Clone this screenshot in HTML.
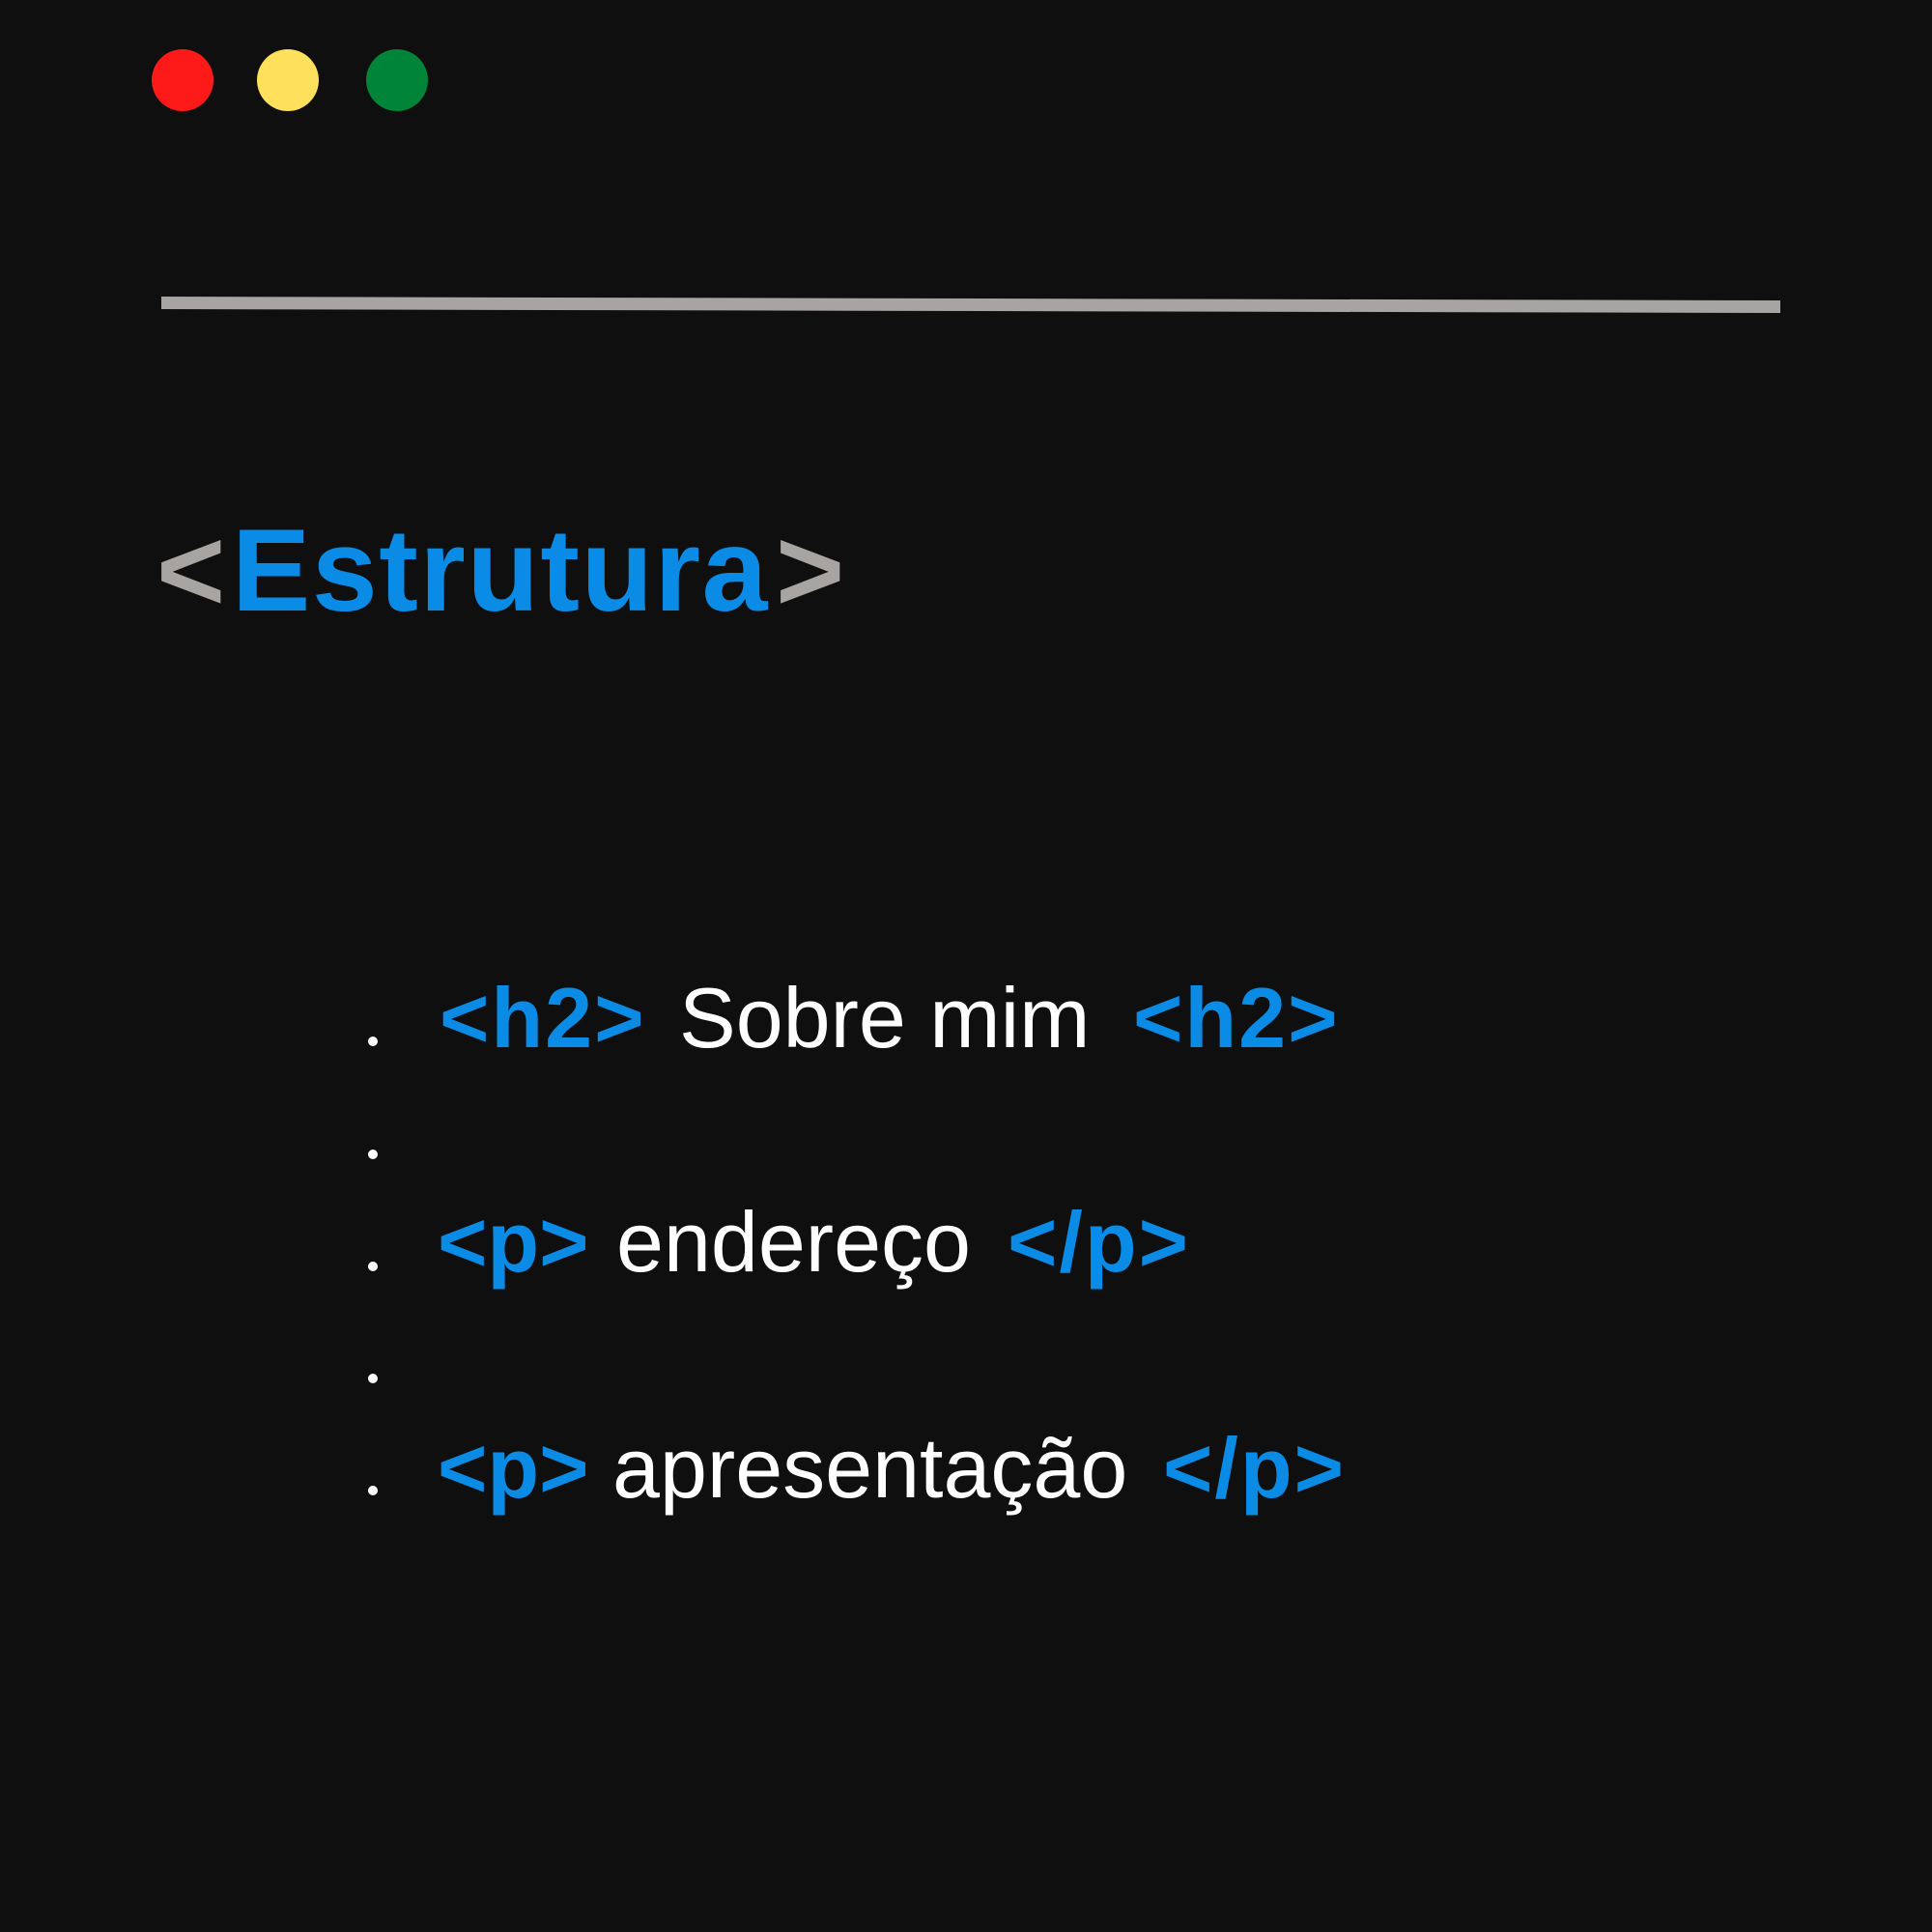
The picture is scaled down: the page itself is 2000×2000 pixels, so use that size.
<!DOCTYPE html>
<html><head><meta charset="utf-8"><style>
html,body{margin:0;padding:0;}
body{width:2000px;height:2000px;background:#0f0f0f;position:relative;overflow:hidden;font-family:"Liberation Sans",sans-serif;}
.d{position:absolute;width:64px;height:64px;border-radius:50%;top:51px;}
.t{position:absolute;line-height:1;white-space:nowrap;}
.h{font-size:122px;font-weight:bold;top:529px;}
.l{font-size:88px;}
.b{color:#0a8be6;font-weight:bold;}
.w{color:#ffffff;}
.g{color:#a8a4a2;}
.bl{position:absolute;width:10px;height:10px;border-radius:50%;background:#fff;left:381px;}
</style></head><body>
<div class="d" style="left:157px;background:#ff1a1a"></div>
<div class="d" style="left:266px;background:#ffe05c"></div>
<div class="d" style="left:379px;background:#00843a"></div>
<svg style="position:absolute;left:0;top:0" width="2000" height="400"><polygon points="167,307 1843,311 1843,324 167,320" fill="#a8a4a2"/></svg>

<div class="t h g" style="left:162px">&lt;</div>
<div class="t h b" style="left:240px;letter-spacing:1.5px">Estrutura</div>
<div class="t h g" style="left:803px">&gt;</div>

<div class="bl" style="top:1073px"></div>
<div class="bl" style="top:1190px"></div>
<div class="bl" style="top:1306px"></div>
<div class="bl" style="top:1422px"></div>
<div class="bl" style="top:1538px"></div>

<div class="t l b" style="left:455px;top:1010px;letter-spacing:2px">&lt;h2&gt;</div>
<div class="t l w" style="left:703px;top:1010px">Sobre mim</div>
<div class="t l b" style="left:1173px;top:1010px;letter-spacing:2px">&lt;h2&gt;</div>

<div class="t l b" style="left:453px;top:1242px">&lt;p&gt;</div>
<div class="t l w" style="left:638px;top:1242px">endereço</div>
<div class="t l b" style="left:1043px;top:1242px;letter-spacing:2px">&lt;/p&gt;</div>

<div class="t l b" style="left:453px;top:1476px">&lt;p&gt;</div>
<div class="t l w" style="left:634px;top:1476px">apresentação</div>
<div class="t l b" style="left:1204px;top:1476px;letter-spacing:2px">&lt;/p&gt;</div>
</body></html>
